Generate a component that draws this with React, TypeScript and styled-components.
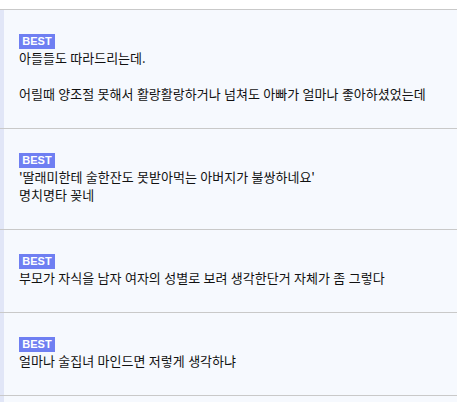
import { FC } from 'react';
import styled, { createGlobalStyle } from 'styled-components';

const GlobalStyle = createGlobalStyle`
  html, body {
    margin: 0;
    padding: 0;
    background: #fff;
  }
  body {
    font-family: 'Noto Sans CJK KR', 'Noto Sans', sans-serif;
  }
`;

type CommentType = {
  id: number;
  lines: string[];
};

const comments: CommentType[] = [
  {
    id: 1,
    lines: [
      '아들들도 따라드리는데.',
      '',
      '어릴때 양조절 못해서 활랑활랑하거나 넘쳐도 아빠가 얼마나 좋아하셨었는데',
    ],
  },
  {
    id: 2,
    lines: ["'딸래미한테 술한잔도 못받아먹는 아버지가 불쌍하네요'", '명치명타 꽂네'],
  },
  {
    id: 3,
    lines: ['부모가 자식을 남자 여자의 성별로 보려 생각한단거 자체가 좀 그렇다'],
  },
  {
    id: 4,
    lines: ['얼마나 술집녀 마인드면 저렇게 생각하냐'],
  },
];

const Page = styled.div`
  padding-top: 9px;
  background: #fff;
`;

const List = styled.ul`
  margin: 0;
  padding: 0;
  list-style: none;
`;

const Item = styled.li`
  border-top: 1px solid #c9c9c9;
  background: #f6f9fe;
`;

const Body = styled.div`
  border-left: 4px solid #e1e6f7;
  padding: 24px 15px 25px;
`;

const Badge = styled.span`
  display: block;
  width: 36px;
  height: 15px;
  background: #6f7ff2;
  color: #fff;
  font-family: 'Liberation Sans', Arial, sans-serif;
  font-size: 11px;
  font-weight: 700;
  line-height: 15px;
  text-align: center;
`;

const Text = styled.p`
  margin: 0;
  font-size: 13px;
  line-height: 18px;
  color: #111;
  word-spacing: 0.5px;
  white-space: pre-wrap;
  min-height: 18px;
`;

const Tail = styled.div`
  height: 6px;
  border-top: 1px solid #c9c9c9;
  background: #f6f9fe;
  box-shadow: inset 4px 0 0 #e1e6f7;
`;

const Comment: FC<{ lines: string[] }> = ({ lines }) => (
  <Item>
    <Body>
      <Badge>BEST</Badge>
      {lines.map((line, i) => (
        <Text key={i}>{line}</Text>
      ))}
    </Body>
  </Item>
);

export default function App() {
  return (
    <Page>
      <GlobalStyle />
      <List>
        {comments.map(c => (
          <Comment key={c.id} lines={c.lines} />
        ))}
      </List>
      <Tail />
    </Page>
  );
}
